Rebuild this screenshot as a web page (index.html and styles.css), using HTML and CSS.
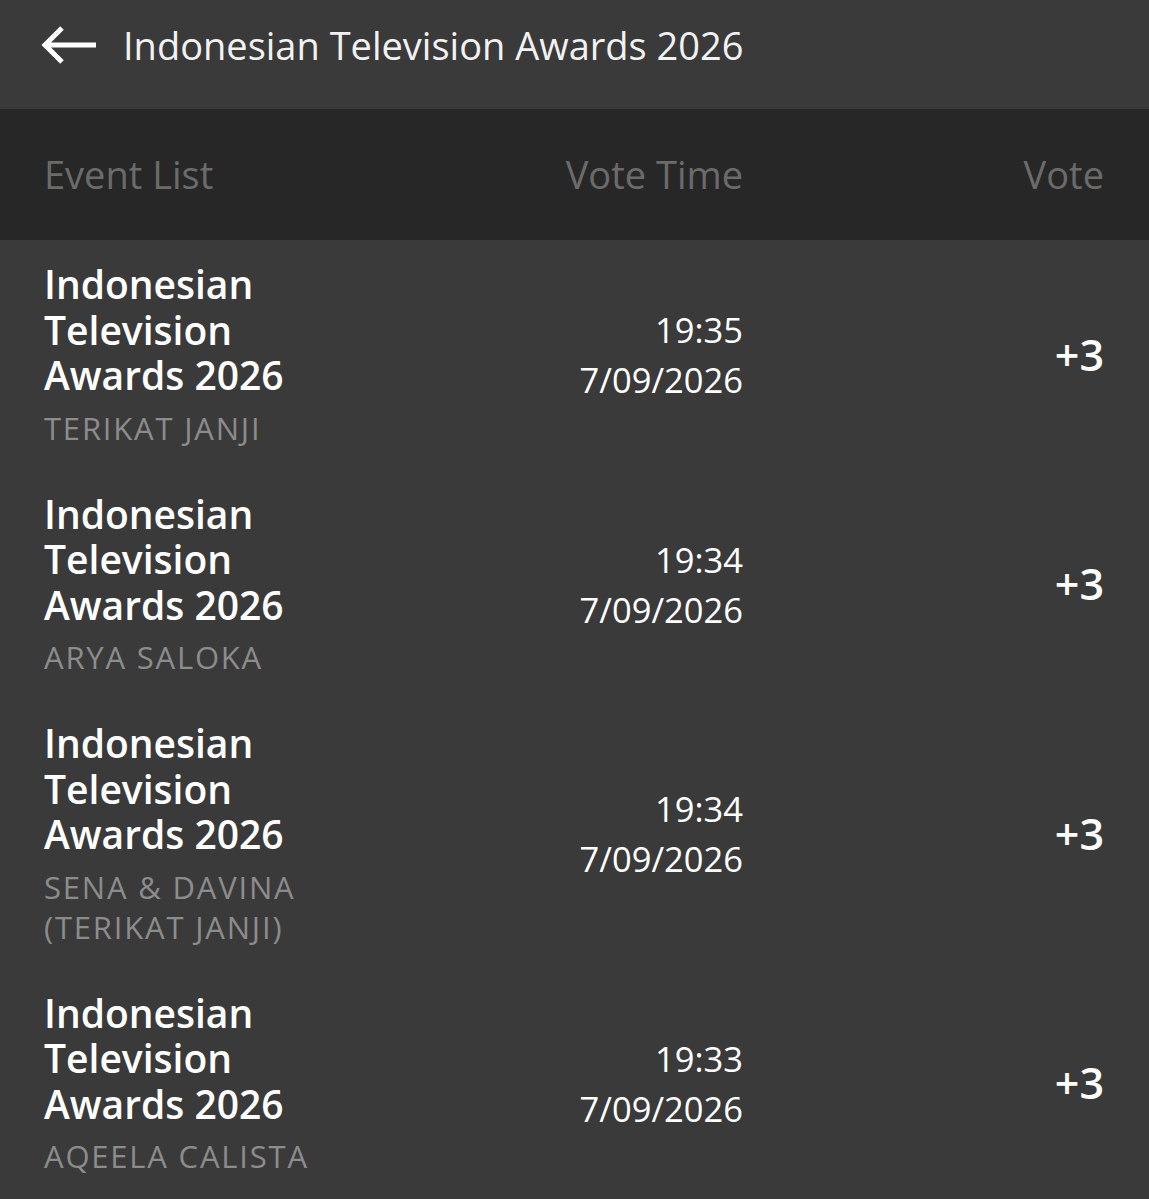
FILE: index.html
```html
<!DOCTYPE html>
<html lang="en">
<head>
  <meta charset="UTF-8" />
  <meta name="viewport" content="width=device-width, initial-scale=1.0"/>
  <title>Vote History</title>
  <link rel="stylesheet" href="styles.css">
</head>
<body>
  <div class="topbar">
    <button class="back" aria-label="Back">
      <svg width="58" height="40" viewBox="0 0 58 40">
        <path d="M56 20H6M22 3L5 20l17 17" fill="none" stroke="#fff" stroke-width="5"/>
      </svg>
    </button>
    <h1>Indonesian Television Awards 2026</h1>
  </div>

  <div class="table-head">
    <span>Event List</span>
    <span class="col-time">Vote Time</span>
    <span class="col-vote">Vote</span>
  </div>

  <div class="list">
    <div class="row">
      <div class="event">
        <div class="event-name">Indonesian Television Awards 2026</div>
        <div class="event-sub">TERIKAT JANJI</div>
      </div>
      <div class="col-time time">19:35<br>7/09/2026</div>
      <div class="col-vote vote">+3</div>
    </div>
    <div class="row">
      <div class="event">
        <div class="event-name">Indonesian Television Awards 2026</div>
        <div class="event-sub">ARYA SALOKA</div>
      </div>
      <div class="col-time time">19:34<br>7/09/2026</div>
      <div class="col-vote vote">+3</div>
    </div>
    <div class="row">
      <div class="event">
        <div class="event-name">Indonesian Television Awards 2026</div>
        <div class="event-sub">SENA &amp; DAVINA (TERIKAT JANJI)</div>
      </div>
      <div class="col-time time">19:34<br>7/09/2026</div>
      <div class="col-vote vote">+3</div>
    </div>
    <div class="row">
      <div class="event">
        <div class="event-name">Indonesian Television Awards 2026</div>
        <div class="event-sub">AQEELA CALISTA</div>
      </div>
      <div class="col-time time">19:33<br>7/09/2026</div>
      <div class="col-vote vote">+3</div>
    </div>
  </div>
</body>
</html>
```

FILE: styles.css
```css
body {
  margin: 0;
  font-family: "Open Sans", "Noto Sans", sans-serif;
  background: #3a3a3a;
  color: #fff;
}
.topbar {
  height: 109px;
  display: flex;
  align-items: center;
  padding: 0 40px;
  background: #3a3a3a;
  padding-bottom: 20px;
  box-sizing: border-box;
}
.back {
  background: none;
  border: 0;
  padding: 0;
  margin-right: 25px;
  display: flex;
}
.topbar h1 {
  margin: 0;
  font-size: 38px;
  font-weight: 400;
  color: #f2f2f2;
}
.table-head,
.row {
  display: grid;
  grid-template-columns: 300px 1fr 361px;
  padding: 0 45px 0 44px;
}
.table-head {
  height: 131px;
  align-items: center;
  background: #272727;
  color: #6b6b6b;
  font-size: 38px;
  padding-bottom: 2px;
  box-sizing: border-box;
}
.col-time,
.col-vote {
  text-align: right;
}
.row {
  align-items: center;
  padding-top: 21px;
  padding-bottom: 22px;
}
.event-name {
  font-size: 39px;
  font-weight: 600;
  line-height: 45.5px;
}
.event-sub {
  margin-top: 10px;
  font-size: 31px;
  line-height: 40px;
  letter-spacing: 1.8px;
  color: #8c8c8c;
}
.time {
  font-size: 34.5px;
  line-height: 50px;
  padding-top: 2px;
}
.vote {
  font-size: 43px;
  font-weight: 600;
}
```
